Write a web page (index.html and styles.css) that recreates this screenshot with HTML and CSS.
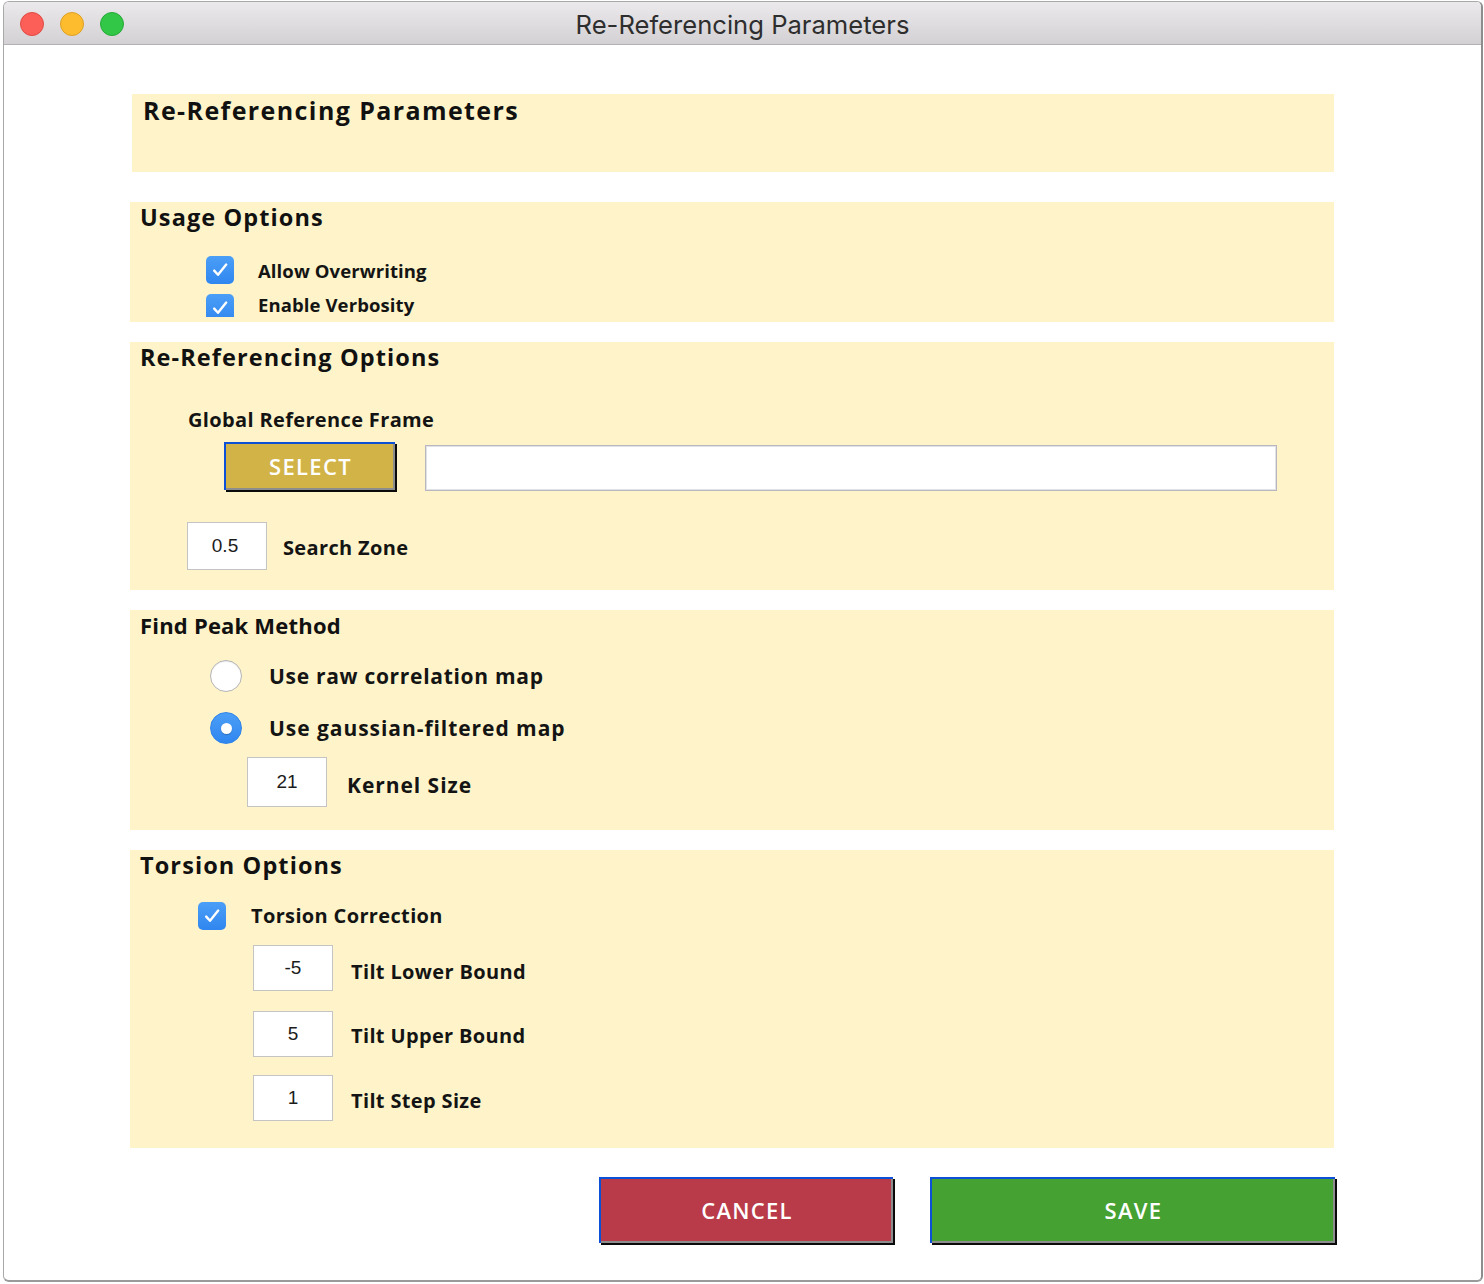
FILE: index.html
```html
<!DOCTYPE html>
<html>
<head>
<meta charset="utf-8">
<title>Re-Referencing Parameters</title>
<link rel="stylesheet" href="styles.css">
</head>
<body>
<div class="window">
  <div class="titlebar">
    <div class="lights">
      <span class="light red"></span>
      <span class="light yellow"></span>
      <span class="light green"></span>
    </div>
    <div class="wtitle">Re-Referencing Parameters</div>
    <div class="spacer"></div>
  </div>
  <div class="content">
    <section class="panel p-head">
      <h1 class="ptitle ptitle-main">Re-Referencing Parameters</h1>
    </section>

    <section class="panel p-usage">
      <h2 class="ptitle">Usage Options</h2>
      <div class="row crow-1">
        <span class="cbox"><svg width="28" height="28" viewBox="0 0 28 28"><defs><linearGradient id="cg1" x1="0" y1="0" x2="0" y2="1"><stop offset="0" stop-color="#4c9ff7"/><stop offset="1" stop-color="#2f86ef"/></linearGradient></defs><rect x="0" y="0" width="28" height="28" rx="5" fill="url(#cg1)"/><path d="M8.2 14.6 L12 18.8 L20.2 8.6" fill="none" stroke="#fff" stroke-width="2.4" stroke-linecap="round" stroke-linejoin="round"/></svg></span>
        <span class="lbl lbl-a">Allow Overwriting</span>
      </div>
      <div class="row crow-2">
        <span class="cbox cbox-2"><svg width="28" height="28" viewBox="0 0 28 28"><rect x="0" y="0" width="28" height="28" rx="5" fill="url(#cg1)"/><path d="M8.2 14.6 L12 18.8 L20.2 8.6" fill="none" stroke="#fff" stroke-width="2.4" stroke-linecap="round" stroke-linejoin="round"/></svg></span>
        <span class="lbl lbl-a">Enable Verbosity</span>
      </div>
    </section>

    <section class="panel p-reref">
      <h2 class="ptitle">Re-Referencing Options</h2>
      <div class="lbl lbl-b gl-label">Global Reference Frame</div>
      <div class="row select-row">
        <button class="btn btn-select">SELECT</button>
        <div class="field-wide"></div>
      </div>
      <div class="row sz-row">
        <div class="num num-48">0.5</div>
        <span class="lbl lbl-b lbl-sz">Search Zone</span>
      </div>
    </section>

    <section class="panel p-peak">
      <h2 class="ptitle ptitle-peak">Find Peak Method</h2>
      <div class="row r1">
        <span class="radio"></span>
        <span class="lbl lbl-c lbl-r1">Use raw correlation map</span>
      </div>
      <div class="row r2">
        <span class="radio on"><span class="dot"></span></span>
        <span class="lbl lbl-c">Use gaussian-filtered map</span>
      </div>
      <div class="row k-row">
        <div class="num num-50">21</div>
        <span class="lbl lbl-c lbl-k">Kernel Size</span>
      </div>
    </section>

    <section class="panel p-tors">
      <h2 class="ptitle">Torsion Options</h2>
      <div class="row tc-row">
        <span class="cbox"><svg width="28" height="28" viewBox="0 0 28 28"><rect x="0" y="0" width="28" height="28" rx="5" fill="url(#cg1)"/><path d="M8.2 14.6 L12 18.8 L20.2 8.6" fill="none" stroke="#fff" stroke-width="2.4" stroke-linecap="round" stroke-linejoin="round"/></svg></span>
        <span class="lbl lbl-b lbl-tc">Torsion Correction</span>
      </div>
      <div class="row tilt t1">
        <div class="num num-46">-5</div>
        <span class="lbl lbl-b lbl-t1">Tilt Lower Bound</span>
      </div>
      <div class="row tilt t2">
        <div class="num num-46">5</div>
        <span class="lbl lbl-b lbl-t2">Tilt Upper Bound</span>
      </div>
      <div class="row tilt t3">
        <div class="num num-46">1</div>
        <span class="lbl lbl-b lbl-t3">Tilt Step Size</span>
      </div>
    </section>

    <div class="actions">
      <button class="btn btn-cancel">CANCEL</button>
      <button class="btn btn-save">SAVE</button>
    </div>
  </div>
</div>
</body>
</html>
```

FILE: styles.css
```css
html, body {
  margin: 0;
  padding: 0;
}
body {
  width: 1484px;
  height: 1284px;
  overflow: hidden;
  background: #ffffff;
  font-family: "Open Sans", "Noto Sans", sans-serif;
  color: #141414;
}

.window {
  box-sizing: border-box;
  margin: 1px 0 0 3px;
  width: 1480px;
  height: 1281px;
  border: 1px solid #a9a9a9;
  border-right: 2px solid #8d8d8d;
  border-bottom: 2px solid #9a9a9a;
  border-radius: 6px;
  background: #ffffff;
  overflow: hidden;
}

.titlebar {
  height: 42px;
  border-bottom: 1px solid #b3b1b3;
  background: linear-gradient(#ebe9eb, #d3d1d3);
  display: grid;
  grid-template-columns: 1fr auto 1fr;
  align-items: center;
}
.lights {
  display: flex;
  gap: 16px;
  padding-left: 16px;
  margin-top: 2px;
}
.light {
  width: 24px;
  height: 24px;
  border-radius: 50%;
  box-sizing: border-box;
}
.light.red { background: #fc5f57; border: 1px solid #df4a42; }
.light.yellow { background: #fdbc2e; border: 1px solid #dfa024; }
.light.green { background: #33c748; border: 1px solid #28a938; }

.wtitle {
  font-family: Inter, "Liberation Sans", Arial, sans-serif;
  font-size: 25.6px;
  line-height: 29px;
  padding-top: 3px;
  color: #2e2e2e;
}

.content {
  padding-top: 49px;
}

.panel {
  box-sizing: border-box;
  background: #fff4c9;
  margin-left: 126px;
  width: 1204px;
  padding-left: 10px;
  overflow: hidden;
}
.p-head {
  margin-left: 128px;
  width: 1202px;
  height: 78px;
  padding-left: 11px;
  padding-top: 1px;
}
.p-usage { margin-top: 30px; height: 120px; }
.p-reref { margin-top: 20px; height: 248px; }
.p-peak { margin-top: 20px; height: 220px; }
.p-tors { margin-top: 20px; height: 298px; }

.ptitle {
  margin: 0;
  font-size: 23.5px;
  font-weight: 700;
  line-height: 30px;
  letter-spacing: 1.1px;
  color: #111111;
  white-space: nowrap;
}
.ptitle-main {
  font-size: 25px;
  letter-spacing: 1.4px;
}
.ptitle-peak {
  font-size: 22px;
  letter-spacing: 0.2px;
}

.row {
  display: flex;
  align-items: flex-start;
}
.lbl {
  font-weight: 700;
  line-height: 26px;
  color: #141414;
  white-space: nowrap;
}
.lbl-a { font-size: 18.5px; letter-spacing: 0.1px; }
.lbl-b { font-size: 20px; letter-spacing: 0.35px; }
.lbl-c { font-size: 21px; letter-spacing: 0.95px; }
.lbl-c.lbl-r1 { letter-spacing: 0.7px; }

.cbox {
  display: block;
  width: 28px;
  height: 28px;
}
.cbox svg { display: block; }

/* usage */
.crow-1 { margin: 24px 0 0 66px; }
.crow-1 .lbl { margin: 1.5px 0 0 24px; }
.crow-2 { margin: 7px 0 0 66px; height: 26px; overflow: hidden; }
.crow-2 .cbox { margin-top: 3px; }
.crow-2 .lbl { margin: 0.5px 0 0 24px; }

/* re-ref */
.gl-label { margin: 35px 0 0 48px; }
.select-row { margin: 9px 0 0 84px; }
.field-wide {
  box-sizing: border-box;
  margin: 3px 0 0 30px;
  width: 852px;
  height: 46px;
  background: #ffffff;
  border: 1px solid #b8b7bf;
  box-shadow: inset 0 0 0 1px #e2e1e6;
}
.sz-row { margin: 31px 0 0 47px; }
.lbl-sz { margin: 13px 0 0 16px; }

.num {
  box-sizing: border-box;
  width: 80px;
  background: #ffffff;
  border: 1px solid #c4c4c4;
  display: flex;
  align-items: center;
  justify-content: center;
  font-family: "Liberation Sans", Arial, sans-serif;
  font-size: 19px;
  color: #1c1c1c;
}
.num-48 { height: 48px; padding-right: 4px; }
.num-50 { height: 50px; }
.num-46 { height: 46px; }

/* radio */
.radio {
  box-sizing: border-box;
  display: flex;
  align-items: center;
  justify-content: center;
  width: 32px;
  height: 32px;
  border-radius: 50%;
  background: #ffffff;
  border: 1px solid #b4b4b4;
  box-shadow: inset 0 1px 1px rgba(0,0,0,0.08);
}
.radio.on {
  border: 1px solid #2f84ea;
  background: linear-gradient(#4c9ff7, #2f86ef);
  box-shadow: none;
}
.dot {
  width: 11px;
  height: 11px;
  border-radius: 50%;
  background: #ffffff;
  box-shadow: 0 1px 1px rgba(0,0,0,0.2);
}
.r1 { margin: 20px 0 0 70px; }
.r2 { margin: 20px 0 0 70px; }
.r1 .lbl { margin: 2.5px 0 0 27px; }
.r2 .lbl { margin: 3px 0 0 27px; }
.k-row { margin: 13px 0 0 107px; }
.lbl-k { margin: 14.5px 0 0 20px; }

/* torsion */
.tc-row { margin: 22px 0 0 58px; }
.lbl-tc { margin: 1.2px 0 0 25px; }
.tilt { margin-left: 113px; }
.t1 { margin-top: 15px; }
.t2 { margin-top: 20px; }
.t3 { margin-top: 18px; }
.lbl-t1 { margin: 13.5px 0 0 18px; }
.lbl-t2 { margin: 12.2px 0 0 18px; }
.lbl-t3 { margin: 12.5px 0 0 18px; }

/* buttons */
.btn {
  box-sizing: border-box;
  border: none;
  border-top: 2px solid #0d50d8;
  border-left: 2px solid #0d50d8;
  box-shadow: inset -2px -2px 0 #8d8d8d, 2px 2px 0 #0a0a0a;
  color: #ffffff;
  font-family: "Open Sans", "Noto Sans", sans-serif;
  font-size: 22px;
  font-weight: 600;
  letter-spacing: 1.3px;
  padding: 0 0 3px 0;
  margin: 0;
}
.btn-select {
  width: 171px;
  height: 48px;
  background: #d2b347;
}
.actions {
  display: flex;
  gap: 37px;
  margin: 29px 0 0 595px;
}
.btn-cancel {
  width: 294px;
  height: 66px;
  background: #b93a48;
}
.btn-save {
  width: 405px;
  height: 66px;
  background: #46a133;
}
```
